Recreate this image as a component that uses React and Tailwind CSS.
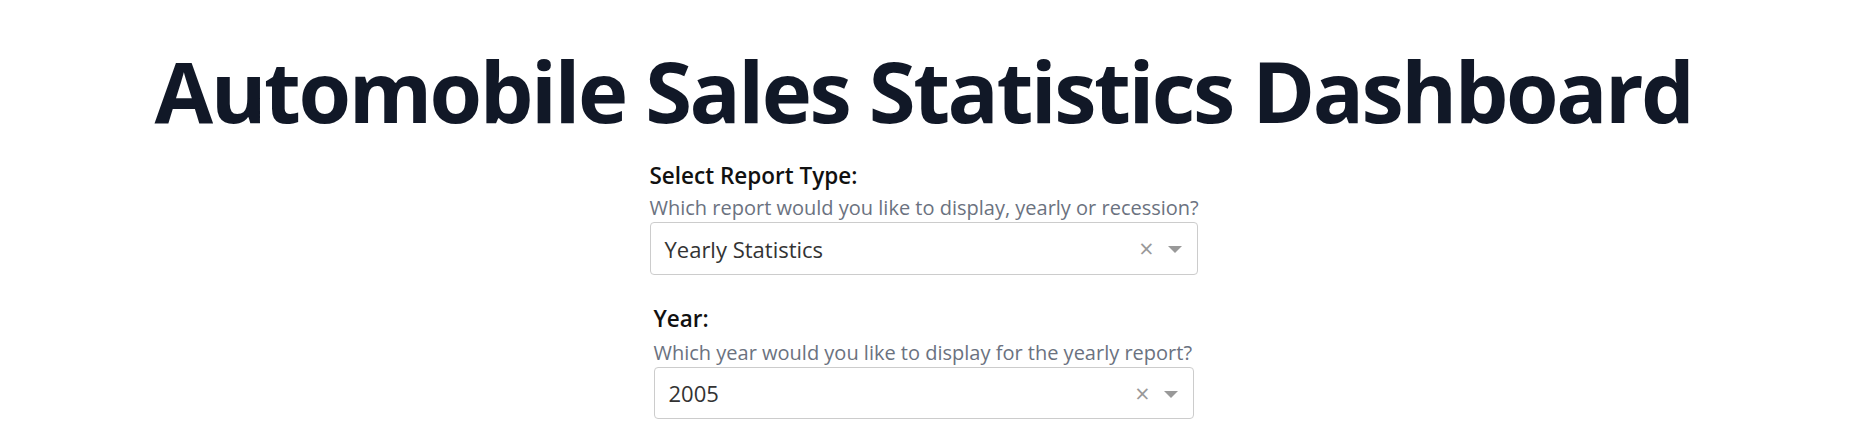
import React from "react";

function Dropdown({ value, height }) {
  return (
    <div className={`${height} w-full border border-[#cccccc] rounded-[4px] bg-white flex items-center pl-[14px] pr-[15px]`}>
      <span className="flex-1 text-[22px] leading-[30px] text-[#333333]">{value}</span>
      <span className="text-[25px] leading-none text-[#999999] mr-[14px]">×</span>
      <svg width="14" height="7" viewBox="0 0 14 7" className="mt-[2px]">
        <path d="M0 0 L14 0 L7 7 Z" fill="#999999" />
      </svg>
    </div>
  );
}

function Field({ label, hint, value, width, hintClass, height }) {
  return (
    <div className={width}>
      <p className="text-[22.5px] leading-[30px] font-semibold text-[#111111]">
        {label}
      </p>
      <p className={`text-[20px] leading-[26px] text-[#6b7280] whitespace-nowrap ${hintClass}`}>
        {hint}
      </p>
      <div className="mt-[1px]">
        <Dropdown value={value} height={height} />
      </div>
    </div>
  );
}

export default function App() {
  return (
    <div className="w-full pr-[17px] bg-white font-['Open_Sans',sans-serif]">
      <div className="flex flex-col items-center">
        <h1 className="mt-[40px] text-[85px] leading-[100px] font-bold text-[#111827] whitespace-nowrap tracking-[-2.5px]">
          Automobile Sales Statistics Dashboard
        </h1>
        <div className="mt-[21px]">
          <Field
            width="w-[548px]"
            label="Select Report Type:"
            hint="Which report would you like to display, yearly or recession?"
            value="Yearly Statistics"
            hintClass="mt-[4px]"
            height="h-[53px]"
          />
        </div>
        <div className="mt-[29px]">
          <Field
            width="w-[540px]"
            label="Year:"
            hint="Which year would you like to display for the yearly report?"
            value="2005"
            hintClass="mt-[6px]"
            height="h-[52px]"
          />
        </div>
      </div>
    </div>
  );
}
